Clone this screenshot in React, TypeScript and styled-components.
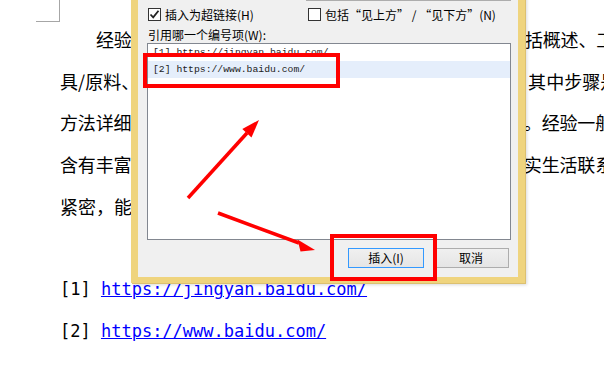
import styled, { createGlobalStyle } from "styled-components";

const Global = createGlobalStyle`
  html, body { margin: 0; padding: 0; background: #fff; }
  body { width: 604px; height: 385px; overflow: hidden; }
`;

const Page = styled.div`
  position: relative;
  width: 604px;
  height: 385px;
  overflow: hidden;
  background: #fff;
`;

const Doc = styled.div`
  padding-left: 60px;
  font-family: "Noto Sans CJK SC", sans-serif;
  font-size: 18px;
  line-height: 41.7px;
  color: #000;
  white-space: nowrap;
`;

const CornerMark = styled.div`
  width: 23px;
  height: 21px;
  margin-left: -24px;
  margin-bottom: -3px;
  border-right: 1px solid #a6a6a6;
  border-bottom: 1px solid #a6a6a6;
`;

// $track: justification spacing that Word spreads over the line
const Line = styled.div<{ $indent?: boolean; $track?: number }>`
  height: 41.7px;
  text-indent: ${(p) => (p.$indent ? "36px" : "0")};
  letter-spacing: ${(p) => p.$track ?? 0}px;
`;

const RefLine = styled(Line)`
  font-family: "DejaVu Sans Mono", monospace;
  font-size: 17px;
`;

const Link = styled.a`
  color: #0000ff;
  text-decoration: underline;
`;

const Dialog = styled.div`
  position: absolute;
  left: 131px;
  top: -5px;
  width: 380px;
  height: 282px;
  border: 7px solid #efd47e;
  border-top: none;
  border-bottom-width: 6px;
  background: #f0f0f0;
  box-shadow: 1px 1px 0 #dcc070, 2px 2px 3px rgba(0, 0, 0, 0.15);
  font-family: "Noto Sans CJK SC", sans-serif;
  font-size: 12px;
  color: #000;
  display: flex;
  flex-direction: column;
`;

const TopEdge = styled.div`
  height: 5px;
  margin: 0 7px 0 168px;
  border: 1px solid #adadad;
  border-top: none;
`;

const CheckRow = styled.div`
  display: grid;
  grid-template-columns: 160px auto;
  margin-top: 7px;
  padding-left: 10px;
  height: 13px;
`;

const CheckItem = styled.label`
  display: flex;
  align-items: center;
  gap: 4px;
  line-height: 13px;
  white-space: nowrap;
`;

// full-width quotation marks, as the Windows UI font draws them
const Quote = styled.span<{ $open?: boolean }>`
  display: inline-block;
  width: 12px;
  text-align: ${(p) => (p.$open ? "right" : "left")};
`;

const Box = styled.span`
  width: 11px;
  height: 11px;
  border: 1px solid #333;
  background: #fff;
  display: flex;
  align-items: center;
  justify-content: center;
  flex: none;
`;

const Label = styled.div`
  margin: 7px 0 0 10px;
  height: 14px;
  line-height: 14px;
`;

const ListBox = styled.div`
  margin: 1px 0 0 9px;
  width: 362px;
  height: 195px;
  border: 1px solid #828790;
  background: #fff;
`;

const ListItem = styled.div<{ $selected?: boolean }>`
  height: 17px;
  line-height: 17px;
  padding-left: 5px;
  font-family: "Liberation Mono", monospace;
  font-size: 9.75px;
  color: #222;
  background: ${(p) => (p.$selected ? "#e5eefb" : "transparent")};
`;

const ButtonRow = styled.div`
  display: flex;
  justify-content: flex-end;
  gap: 9px;
  margin-top: 8px;
  padding-right: 9px;
`;

const Button = styled.button<{ $default?: boolean }>`
  width: 76px;
  height: 20px;
  padding: 0;
  border: 1px solid ${(p) => (p.$default ? "#3399ff" : "#adadad")};
  background: linear-gradient(#f0f0f0, #e5e5e5);
  font-family: "Noto Sans CJK SC", sans-serif;
  font-size: 12px;
  line-height: 18px;
  color: #000;
`;

const Overlay = styled.svg`
  position: absolute;
  left: 0;
  top: 0;
  pointer-events: none;
`;

const Check = () => (
  <svg width="11" height="11" viewBox="0 0 11 11">
    <path d="M1.5 5.5 L4.2 8.3 L9.5 1.8" fill="none" stroke="#222" strokeWidth="1.8" />
  </svg>
);

const Arrow = ({ d, head }: { d: string; head: string }) => (
  <g>
    <path d={d} stroke="#ff0000" strokeWidth="3.5" fill="none" />
    <polygon points={head} fill="#ff0000" />
  </g>
);

export default function App() {
  return (
    <Page>
      <Global />
      <Doc>
        <CornerMark />
        <Line $indent $track={-0.13}>
          经验是用户亲身实践后总结出来的解决办法，其内容包括概述、工具
        </Line>
        <Line $track={0.04}>具/原料、操作步骤、注意事项和参考资料等5个部分组成。其中步骤是经验的核心</Line>
        <Line $track={-0.16}>方法详细、条理清晰，让读者能够按照步骤一步步完成操作。经验一般都</Line>
        <Line $track={-0.16}>含有丰富的图文说明，内容真实可靠，实用性强，并且与现实生活联系</Line>
        <Line>紧密，能够帮助用户解决实际问题。</Line>
        <Line />
        <RefLine>
          [1] <Link>https://jingyan.baidu.com/</Link>
        </RefLine>
        <RefLine>
          [2] <Link>https://www.baidu.com/</Link>
        </RefLine>
      </Doc>

      <Dialog>
        <TopEdge />
        <CheckRow>
          <CheckItem>
            <Box>
              <Check />
            </Box>
            插入为超链接(H)
          </CheckItem>
          <CheckItem>
            <Box />
            <span>
              包括<Quote $open>“</Quote>见上方<Quote>”</Quote> / <Quote $open>“</Quote>见下方
              <Quote>”</Quote>(N)
            </span>
          </CheckItem>
        </CheckRow>
        <Label>引用哪一个编号项(W):</Label>
        <ListBox>
          <ListItem>[1] https://jingyan.baidu.com/</ListItem>
          <ListItem $selected>[2] https://www.baidu.com/</ListItem>
        </ListBox>
        <ButtonRow>
          <Button $default>插入(I)</Button>
          <Button>取消</Button>
        </ButtonRow>
      </Dialog>

      <Overlay width="604" height="385">
        <rect x="145" y="55" width="193" height="31" fill="none" stroke="#ff0000" strokeWidth="4" />
        <rect x="332" y="236" width="103" height="43" fill="none" stroke="#ff0000" strokeWidth="4" />
        <Arrow d="M188 198 L247 133" head="259,120 251.5,137.5 242.3,129" />
        <Arrow d="M218 213 L299 243" head="315,250 297.5,239.5 300.5,251.5" />
      </Overlay>
    </Page>
  );
}
